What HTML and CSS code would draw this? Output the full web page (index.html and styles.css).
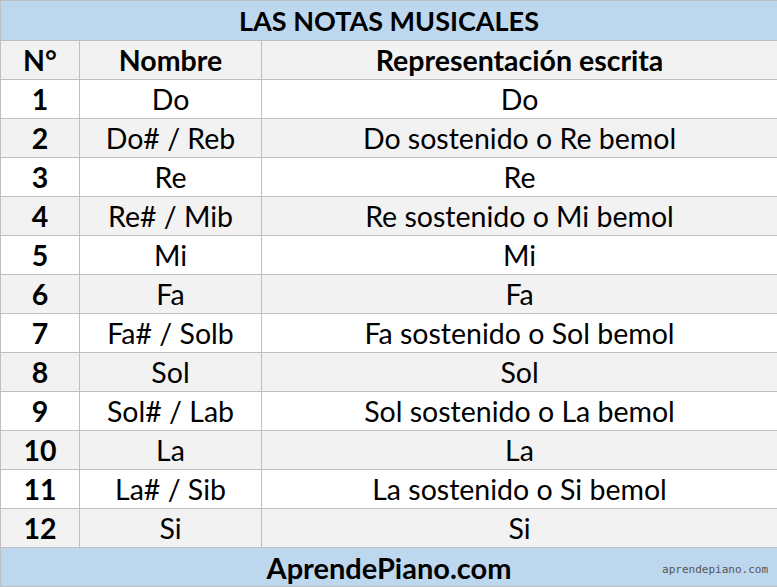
FILE: index.html
```html
<!DOCTYPE html>
<html lang="es">
<head>
<meta charset="utf-8">
<title>Las notas musicales</title>
<link rel="stylesheet" href="styles.css">
</head>
<body>
<table class="notes">
  <colgroup>
    <col class="c-num"><col class="c-name"><col class="c-rep">
  </colgroup>
  <thead>
    <tr class="title"><th colspan="3">LAS NOTAS MUSICALES</th></tr>
    <tr class="head"><th>N°</th><th>Nombre</th><th>Representación escrita</th></tr>
  </thead>
  <tbody>
    <tr><td class="num">1</td><td>Do</td><td>Do</td></tr>
    <tr><td class="num">2</td><td>Do# / Reb</td><td>Do sostenido o Re bemol</td></tr>
    <tr><td class="num">3</td><td>Re</td><td>Re</td></tr>
    <tr><td class="num">4</td><td>Re# / Mib</td><td>Re sostenido o Mi bemol</td></tr>
    <tr><td class="num">5</td><td>Mi</td><td>Mi</td></tr>
    <tr><td class="num">6</td><td>Fa</td><td>Fa</td></tr>
    <tr><td class="num">7</td><td>Fa# / Solb</td><td>Fa sostenido o Sol bemol</td></tr>
    <tr><td class="num">8</td><td>Sol</td><td>Sol</td></tr>
    <tr><td class="num">9</td><td>Sol# / Lab</td><td>Sol sostenido o La bemol</td></tr>
    <tr><td class="num">10</td><td>La</td><td>La</td></tr>
    <tr><td class="num">11</td><td>La# / Sib</td><td>La sostenido o Si bemol</td></tr>
    <tr><td class="num">12</td><td>Si</td><td>Si</td></tr>
  </tbody>
  <tfoot>
    <tr class="foot"><td colspan="3">
      <div class="foot-inner">
        <span></span>
        <span class="brand">AprendePiano.com</span>
        <span class="mark">aprendepiano.com</span>
      </div>
    </td></tr>
  </tfoot>
</table>
</body>
</html>
```

FILE: styles.css
```css
html, body {
  margin: 0;
  padding: 0;
  background: #ffffff;
}
.notes {
  width: 777px;
  border-collapse: collapse;
  table-layout: fixed;
  font-family: Lato, "Open Sans", sans-serif;
  font-size: 28.5px;
  color: #000;
}
.c-num { width: 79px; }
.c-name { width: 182px; }
.c-rep { width: 516px; }
.notes th, .notes td {
  border: 1px solid #bfbfbf;
  height: 38px;
  padding: 0;
  text-align: center;
  vertical-align: middle;
  line-height: 1;
  white-space: nowrap;
}
.notes th { font-weight: 700; }
.title th { background: #bdd7ee; height: 39px; font-size: 27px; }
.head th { background: #f2f2f2; }
.notes tbody tr:nth-child(even) td { background: #f2f2f2; }
.notes td.num { font-weight: 700; }
.foot td { background: #bdd7ee; }
.foot-inner {
  display: grid;
  grid-template-columns: 1fr auto 1fr;
  align-items: center;
}
.brand { font-weight: 700; font-size: 29px; }
.mark {
  justify-self: end;
  padding-right: 9px;
  font-family: "DejaVu Sans Mono", "Liberation Mono", monospace;
  font-size: 11px;
  color: #555;
  padding-top: 4px;
}
```
